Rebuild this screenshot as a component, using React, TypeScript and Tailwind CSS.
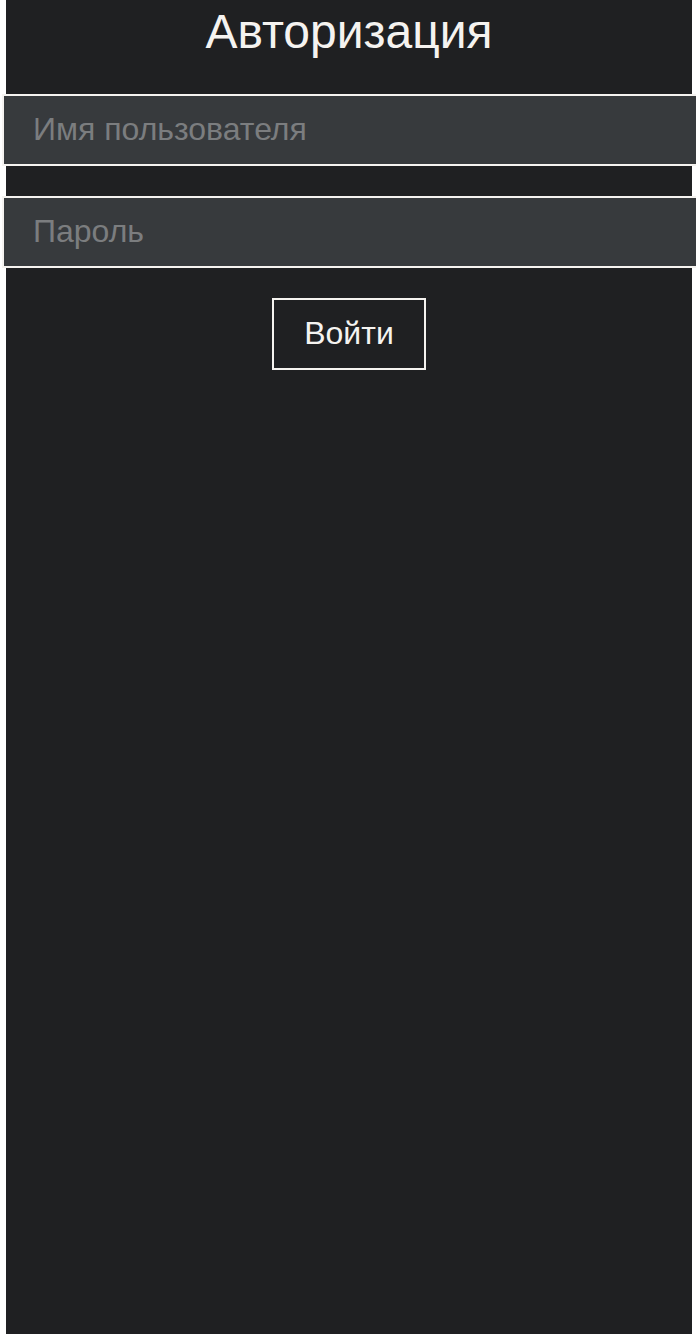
export default function App() {
  return (
    <div className="w-full min-h-screen bg-white overflow-hidden" style={{ fontFamily: '"Liberation Sans", Arial, sans-serif' }}>
      <div className="ml-[6px] mr-[4px] min-h-[1334px] bg-[#1f2022] flex flex-col">
        <div className="h-[94px] pt-[8px] text-center">
          <h1 className="text-[48px] leading-none text-[#f5f3f0]">Авторизация</h1>
        </div>
        <input
          type="text"
          placeholder="Имя пользователя"
          className="-ml-[4px] w-[calc(100%+24px)] h-[72px] border-2 border-[#f5f3f0] bg-[#373a3d] px-[29px] pb-[2px] text-[32px] text-[#f5f3f0] placeholder:text-[#7b7d7f] outline-none"
        />
        <div className="h-[30px]" />
        <input
          type="password"
          placeholder="Пароль"
          className="-ml-[4px] w-[calc(100%+24px)] h-[72px] border-2 border-[#f5f3f0] bg-[#373a3d] px-[29px] pb-[2px] text-[32px] text-[#f5f3f0] placeholder:text-[#7b7d7f] outline-none"
        />
        <div className="flex justify-center pt-[30px]">
          <button className="w-[154px] h-[72px] border-2 border-[#f5f3f0] pb-[2px] text-[32px] text-[#f5f3f0] bg-transparent">
            Войти
          </button>
        </div>
      </div>
    </div>
  );
}
